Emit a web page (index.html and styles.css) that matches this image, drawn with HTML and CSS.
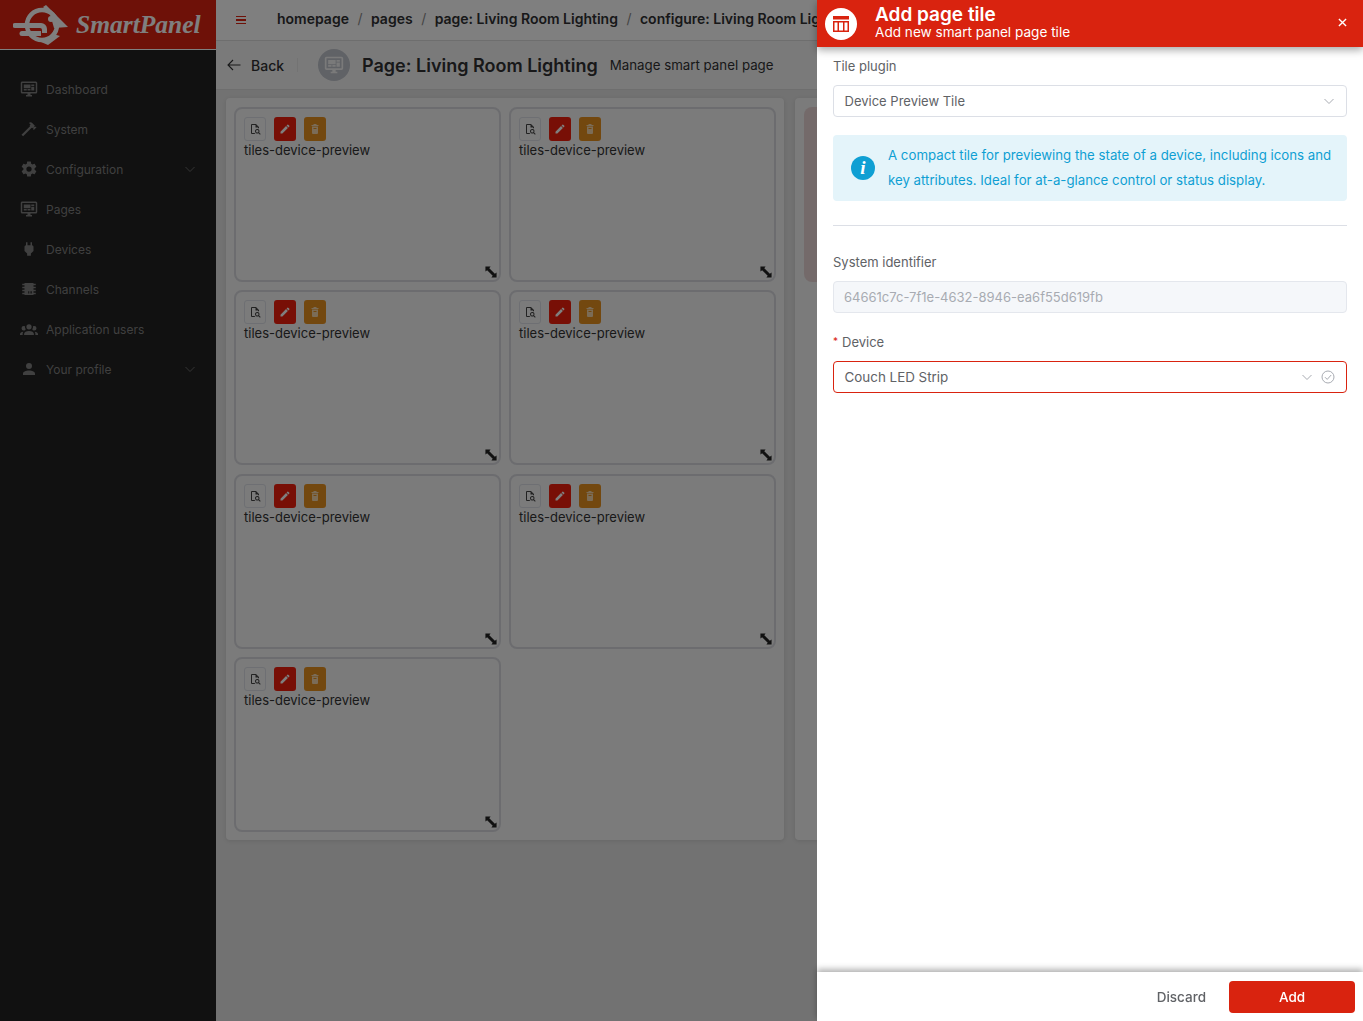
FILE: index.html
```html
<!DOCTYPE html>
<html lang="en">
<head>
    <meta charset="UTF-8">
    <meta name="viewport" content="width=device-width, initial-scale=1.0">
    <title>Add page tile</title>
    <link rel="stylesheet" href="styles.css">
</head>
<body>
    <svg class="sprite" xmlns="http://www.w3.org/2000/svg">
        <symbol id="i-monitor" viewBox="0 0 24 24"><path d="M21,16V4H3V16H21M21,2A2,2 0 0,1 23,4V16A2,2 0 0,1 21,18H14V20H16V22H8V20H10V18H3C1.89,18 1,17.1 1,16V4C1,2.89 1.89,2 3,2H21M5,6H14V11H5V6M15,6H19V8H15V6M19,9V14H15V9H19M5,12H9V14H5V12M10,12H14V14H10V12Z"/></symbol>
        <symbol id="i-hammer" viewBox="0 0 24 24"><path d="M2 19.63L13.43 8.2L12.72 7.5L14.14 6.07L12 3.89C13.2 2.7 15.09 2.7 16.27 3.89L19.87 7.5L18.45 8.91H21.29L22 9.62L18.45 13.21L17.74 12.5V9.62L16.27 11.04L15.56 10.33L4.13 21.76L2 19.63Z"/></symbol>
        <symbol id="i-cog" viewBox="0 0 24 24"><path d="M12,15.5A3.5,3.5 0 0,1 8.5,12A3.5,3.5 0 0,1 12,8.5A3.5,3.5 0 0,1 15.5,12A3.5,3.5 0 0,1 12,15.5M19.43,12.97C19.47,12.65 19.5,12.33 19.5,12C19.5,11.67 19.47,11.34 19.43,11L21.54,9.37C21.73,9.22 21.78,8.95 21.66,8.73L19.66,5.27C19.54,5.05 19.27,4.96 19.05,5.05L16.56,6.05C16.04,5.66 15.5,5.32 14.87,5.07L14.5,2.42C14.46,2.18 14.25,2 14,2H10C9.75,2 9.54,2.18 9.5,2.42L9.13,5.07C8.5,5.32 7.96,5.66 7.44,6.05L4.95,5.05C4.73,4.96 4.46,5.05 4.34,5.27L2.34,8.73C2.21,8.95 2.27,9.22 2.46,9.37L4.57,11C4.53,11.34 4.5,11.67 4.5,12C4.5,12.33 4.53,12.65 4.57,12.97L2.46,14.63C2.27,14.78 2.21,15.05 2.34,15.27L4.34,18.73C4.46,18.95 4.73,19.03 4.95,18.95L7.44,17.94C7.96,18.34 8.5,18.68 9.13,18.93L9.5,21.58C9.54,21.82 9.75,22 10,22H14C14.25,22 14.46,21.82 14.5,21.58L14.87,18.93C15.5,18.67 16.04,18.34 16.56,17.94L19.05,18.95C19.27,19.03 19.54,18.95 19.66,18.73L21.66,15.27C21.78,15.05 21.73,14.78 21.54,14.63L19.43,12.97Z"/></symbol>
        <symbol id="i-plug" viewBox="0 0 24 24"><path d="M16,7V3H14V7H10V3H8V7C7,7 6,8 6,9V14.5L9.5,18V21H14.5V18L18,14.5V9C18,8 17,7 16,7Z"/></symbol>
        <symbol id="i-chip" viewBox="0 0 24 24"><path d="M6,4H18V5H21V7H18V9H21V11H18V13H21V15H18V17H21V19H18V20H6V19H3V17H6V15H3V13H6V11H3V9H6V7H3V5H6V4M11,15V18H12V15H11M13,15V18H14V15H13M15,15V18H16V15H15Z"/></symbol>
        <symbol id="i-users" viewBox="0 0 24 24"><path d="M12,5.5A3.5,3.5 0 0,1 15.5,9A3.5,3.5 0 0,1 12,12.5A3.5,3.5 0 0,1 8.5,9A3.5,3.5 0 0,1 12,5.5M5,8C5.56,8 6.08,8.15 6.53,8.42C6.38,9.85 6.8,11.27 7.66,12.38C7.16,13.34 6.16,14 5,14A3,3 0 0,1 2,11A3,3 0 0,1 5,8M19,8A3,3 0 0,1 22,11A3,3 0 0,1 19,14C17.84,14 16.84,13.34 16.34,12.38C17.2,11.27 17.62,9.85 17.47,8.42C17.92,8.15 18.44,8 19,8M5.5,18.25C5.5,16.18 8.41,14.5 12,14.5C15.59,14.5 18.5,16.18 18.5,18.25V20H5.5V18.25M0,20V18.5C0,17.11 1.89,15.94 4.45,15.6C3.86,16.28 3.5,17.22 3.5,18.25V20H0M24,20H20.5V18.25C20.5,17.22 20.14,16.28 19.55,15.6C22.11,15.94 24,17.11 24,18.5V20Z"/></symbol>
        <symbol id="i-user" viewBox="0 0 24 24"><path d="M12,4A4,4 0 0,1 16,8A4,4 0 0,1 12,12A4,4 0 0,1 8,8A4,4 0 0,1 12,4M12,14C16.42,14 20,15.79 20,18V20H4V18C4,15.79 7.58,14 12,14Z"/></symbol>
        <symbol id="i-chevron" viewBox="0 0 12 12"><path d="M1.5 4L6 8.5L10.5 4" fill="none" stroke="currentColor" stroke-width="1"/></symbol>
        <symbol id="i-pencil" viewBox="0 0 24 24"><path d="M20.71,7.04C21.1,6.65 21.1,6 20.71,5.63L18.37,3.29C18,2.9 17.35,2.9 16.96,3.29L15.12,5.12L18.87,8.87M3,17.25V21H6.75L17.81,9.93L14.06,6.18L3,17.25Z"/></symbol>
        <symbol id="i-trash" viewBox="0 0 24 24"><path d="M9 2h6v2h4v2H5V4h4V2M6 7h12v13a2 2 0 0 1-2 2H8a2 2 0 0 1-2-2V7m3 3v2h6v-2H9Z" fill-rule="evenodd"/></symbol>
        <symbol id="i-file" viewBox="0 0 24 24"><path d="M14,2H6A2,2 0 0,0 4,4V20A2,2 0 0,0 6,22H13C12.59,21.75 12.2,21.44 11.86,21.1C11.53,20.77 11.25,20.4 11,20H6V4H13V9H18V10.18C18.71,10.34 19.39,10.61 20,11V8L14,2M20.31,18.9C21.64,16.79 21,14 18.91,12.68C16.8,11.35 14,12 12.69,14.08C11.35,16.19 12,18.97 14.09,20.3C15.55,21.23 17.41,21.23 18.88,20.32L22,23.39L23.39,22L20.31,18.9M16.5,19A2.5,2.5 0 0,1 14,16.5A2.5,2.5 0 0,1 16.5,14A2.5,2.5 0 0,1 19,16.5A2.5,2.5 0 0,1 16.5,19Z"/></symbol>
        <symbol id="i-resize" viewBox="0 0 14 14"><path d="M0.500 0.500H6.500L5 2.500 11.500 9 13.500 7.500V13.500H7.500L9 11.500 2.500 5 0.500 6.500V0.500Z"/></symbol>
    </svg>

    <div class="app">
        <aside class="sidebar">
            <div class="logo">
                <svg class="logo-mark" viewBox="0 0 56 42">
                    <circle cx="29" cy="21" r="15" fill="none" stroke="currentColor" stroke-width="4.500"/>
                    <path d="M30 3l3-2 22 22-14 1-4-14Z" fill="currentColor"/>
                    <path d="M28 38l12-8 7 2-12 9Z" fill="currentColor"/>
                    <path d="M2 19h26a6 6 0 0 1 6 6v4h-5v-3a2 2 0 0 0-2-2H2a2.500 2.500 0 0 1 0-5Z" fill="currentColor"/>
                    <path d="M9 27h19v5H9a2.500 2.500 0 0 1 0-5Z" fill="currentColor"/>
                    <circle cx="38" cy="15" r="3" fill="currentColor"/>
                </svg>
                <span class="logo-text">SmartPanel</span>
            </div>
            <nav class="menu">
                <a class="menu-item"><svg class="menu-icon"><use href="#i-monitor"/></svg>Dashboard</a>
                <a class="menu-item"><svg class="menu-icon"><use href="#i-hammer"/></svg>System</a>
                <a class="menu-item"><svg class="menu-icon"><use href="#i-cog"/></svg>Configuration<svg class="menu-arrow"><use href="#i-chevron"/></svg></a>
                <a class="menu-item"><svg class="menu-icon"><use href="#i-monitor"/></svg>Pages</a>
                <a class="menu-item"><svg class="menu-icon"><use href="#i-plug"/></svg>Devices</a>
                <a class="menu-item"><svg class="menu-icon"><use href="#i-chip"/></svg>Channels</a>
                <a class="menu-item"><svg class="menu-icon"><use href="#i-users"/></svg>Application users</a>
                <a class="menu-item"><svg class="menu-icon"><use href="#i-user"/></svg>Your profile<svg class="menu-arrow"><use href="#i-chevron"/></svg></a>
            </nav>
        </aside>

        <div class="main">
            <header class="topbar">
                <span class="hamburger"><i></i><i></i><i></i></span>
                <div class="crumbs">
                    <span>homepage</span><em>/</em><span>pages</span><em>/</em><span>page: Living Room Lighting</span><em>/</em><span>configure: Living Room Lighting</span>
                </div>
            </header>
            <div class="page-head">
                <a class="back">
                    <svg class="back-arrow" viewBox="0 0 14 12"><path d="M13.500 6H1M6 1L1 6l5 5" fill="none" stroke="currentColor" stroke-width="1.100"/></svg>
                    Back
                </a>
                <span class="head-sep"></span>
                <span class="head-icon"><svg><use href="#i-monitor"/></svg></span>
                <h1>Page: Living Room Lighting</h1>
                <span class="head-sub">Manage smart panel page</span>
            </div>
            <div class="content">
                <section class="panel">
                    <div class="tile">
                        <div class="tile-actions">
                            <button class="btn-plain"><svg><use href="#i-file"/></svg></button>
                            <button class="btn-red"><svg><use href="#i-pencil"/></svg></button>
                            <button class="btn-orange"><svg><use href="#i-trash"/></svg></button>
                        </div>
                        <div class="tile-name">tiles-device-preview</div>
                        <svg class="tile-resize"><use href="#i-resize"/></svg>
                    </div>
                    <div class="tile">
                        <div class="tile-actions">
                            <button class="btn-plain"><svg><use href="#i-file"/></svg></button>
                            <button class="btn-red"><svg><use href="#i-pencil"/></svg></button>
                            <button class="btn-orange"><svg><use href="#i-trash"/></svg></button>
                        </div>
                        <div class="tile-name">tiles-device-preview</div>
                        <svg class="tile-resize"><use href="#i-resize"/></svg>
                    </div>
                    <div class="tile">
                        <div class="tile-actions">
                            <button class="btn-plain"><svg><use href="#i-file"/></svg></button>
                            <button class="btn-red"><svg><use href="#i-pencil"/></svg></button>
                            <button class="btn-orange"><svg><use href="#i-trash"/></svg></button>
                        </div>
                        <div class="tile-name">tiles-device-preview</div>
                        <svg class="tile-resize"><use href="#i-resize"/></svg>
                    </div>
                    <div class="tile">
                        <div class="tile-actions">
                            <button class="btn-plain"><svg><use href="#i-file"/></svg></button>
                            <button class="btn-red"><svg><use href="#i-pencil"/></svg></button>
                            <button class="btn-orange"><svg><use href="#i-trash"/></svg></button>
                        </div>
                        <div class="tile-name">tiles-device-preview</div>
                        <svg class="tile-resize"><use href="#i-resize"/></svg>
                    </div>
                    <div class="tile">
                        <div class="tile-actions">
                            <button class="btn-plain"><svg><use href="#i-file"/></svg></button>
                            <button class="btn-red"><svg><use href="#i-pencil"/></svg></button>
                            <button class="btn-orange"><svg><use href="#i-trash"/></svg></button>
                        </div>
                        <div class="tile-name">tiles-device-preview</div>
                        <svg class="tile-resize"><use href="#i-resize"/></svg>
                    </div>
                    <div class="tile">
                        <div class="tile-actions">
                            <button class="btn-plain"><svg><use href="#i-file"/></svg></button>
                            <button class="btn-red"><svg><use href="#i-pencil"/></svg></button>
                            <button class="btn-orange"><svg><use href="#i-trash"/></svg></button>
                        </div>
                        <div class="tile-name">tiles-device-preview</div>
                        <svg class="tile-resize"><use href="#i-resize"/></svg>
                    </div>
                    <div class="tile">
                        <div class="tile-actions">
                            <button class="btn-plain"><svg><use href="#i-file"/></svg></button>
                            <button class="btn-red"><svg><use href="#i-pencil"/></svg></button>
                            <button class="btn-orange"><svg><use href="#i-trash"/></svg></button>
                        </div>
                        <div class="tile-name">tiles-device-preview</div>
                        <svg class="tile-resize"><use href="#i-resize"/></svg>
                    </div>
                </section>
                <section class="panel-side">
                    <div class="side-tile"></div>
                </section>
            </div>
        </div>
    </div>

    <div class="overlay"></div>

    <aside class="drawer">
        <header class="drawer-head">
            <span class="drawer-icon">
                <svg viewBox="0 0 16 16"><path d="M0 0h16v3.500H0ZM0 5h16v11H0ZM1.500 6.500v8h3v-8ZM6 6.500v8h4v-8ZM11.500 6.500v8h3v-8Z" fill-rule="evenodd"/></svg>
            </span>
            <div class="drawer-titles">
                <div class="drawer-title">Add page tile</div>
                <div class="drawer-sub">Add new smart panel page tile</div>
            </div>
            <svg class="drawer-close" viewBox="0 0 10 10"><path d="M1 1l8 8M9 1l-8 8" fill="none" stroke="currentColor" stroke-width="1.500"/></svg>
        </header>
        <div class="drawer-body">
            <label class="field-label">Tile plugin</label>
            <div class="select">
                <span>Device Preview Tile</span>
                <svg class="select-arrow"><use href="#i-chevron"/></svg>
            </div>
            <div class="alert">
                <svg class="alert-icon" viewBox="0 0 24 24">
                    <circle cx="12" cy="12" r="12" fill="#0f9fd3"/>
                    <text x="12" y="18" text-anchor="middle" class="alert-i">i</text>
                </svg>
                <p>A compact tile for previewing the state of a device, including icons and key attributes. Ideal for at-a-glance control or status display.</p>
            </div>
            <hr class="divider">
            <label class="field-label">System identifier</label>
            <div class="input-disabled">64661c7c-7f1e-4632-8946-ea6f55d619fb</div>
            <label class="field-label field-required"><b>*</b>Device</label>
            <div class="select select-error">
                <span>Couch LED Strip</span>
                <svg class="select-arrow"><use href="#i-chevron"/></svg>
                <svg class="select-check" viewBox="0 0 14 14"><circle cx="7" cy="7" r="6" fill="none" stroke="currentColor"/><path d="M4 7.200l2.200 2.200L10.200 5" fill="none" stroke="currentColor"/></svg>
            </div>
        </div>
        <footer class="drawer-foot">
            <button class="btn-discard">Discard</button>
            <button class="btn-add">Add</button>
        </footer>
    </aside>
</body>
</html>
```

FILE: styles.css
```css
* {
    box-sizing: border-box;
}
html, body {
    height: 100%;
}
body {
    margin: 0;
    overflow: hidden;
    font-family: Inter, "Liberation Sans", sans-serif;
    font-size: 13px;
    color: #303133;
    background-color: #e4e4e4;
}
.sprite {
    display: none;
}
.app {
    display: flex;
    height: 100%;
}

/* sidebar */
.sidebar {
    flex: 0 0 216px;
    background-color: #222;
    color: #808080;
}
.logo {
    display: flex;
    align-items: center;
    height: 50px;
    padding-left: 13px;
    background-color: #dc2310;
    border-bottom: 1px solid #fff;
    color: #fff;
}
.logo-mark {
    width: 56px;
    height: 42px;
}
.logo-text {
    margin-left: 7px;
    font-family: "Liberation Serif", serif;
    font-style: italic;
    font-weight: 700;
    font-size: 25.500px;
    white-space: nowrap;
}
.menu {
    padding-top: 19px;
}
.menu-item {
    display: flex;
    align-items: center;
    height: 40px;
    padding: 0 20px;
    font-size: 12px;
}
.menu-icon {
    width: 18px;
    height: 18px;
    margin-right: 8px;
    fill: currentColor;
}
.menu-arrow {
    width: 12px;
    height: 12px;
    margin-left: auto;
    color: #6a6a6a;
}

/* main column */
.main {
    flex: 1;
    min-width: 0;
    overflow: hidden;
}
.topbar {
    display: flex;
    align-items: center;
    height: 41px;
    background-color: #fff;
    border-bottom: 1px solid #ddd;
    white-space: nowrap;
}
.hamburger {
    display: flex;
    flex-direction: column;
    gap: 2px;
    margin-left: 20px;
    width: 10px;
}
.hamburger i {
    display: block;
    height: 1.500px;
    background-color: #dc2310;
}
.crumbs {
    margin-left: 31px;
    font-weight: 600;
    font-size: 14px;
    margin-top: -3px;
}
.crumbs em {
    margin: 0 8.500px;
    font-style: normal;
    font-weight: 400;
    color: #8a8a8a;
}
.page-head {
    display: flex;
    align-items: center;
    height: 49px;
    background-color: #f5f5f5;
    border-bottom: 1px solid #ddd;
    white-space: nowrap;
}
.back {
    display: flex;
    align-items: center;
    margin-left: 11px;
    font-size: 14px;
    font-weight: 500;
}
.back-arrow {
    width: 14px;
    height: 12px;
    margin-right: 10px;
}
.head-sep {
    width: 1px;
    height: 14px;
    margin-left: 13px;
    background-color: #e6e6e6;
}
.head-icon {
    display: flex;
    align-items: center;
    justify-content: center;
    width: 32px;
    height: 32px;
    margin-left: 20px;
    border-radius: 50%;
    background-color: #c0c4cc;
}
.head-icon svg {
    width: 20px;
    height: 20px;
    fill: #f5f5f5;
}
h1 {
    margin: 0 0 0 12px;
    font-size: 18px;
    font-weight: 600;
}
.head-sub {
    margin-left: 12px;
    font-size: 13.300px;
}
.content {
    display: flex;
    gap: 11px;
    padding: 8px 10px;
}
.panel {
    flex: 0 0 558px;
    display: grid;
    grid-template-columns: 267px 267px;
    grid-auto-rows: 175px;
    gap: 8.500px 8px;
    padding: 8.750px 8px;
    height: 742px;
    background-color: #f6f6f6;
    border-radius: 4px;
    box-shadow: 0 1px 4px rgba(0, 0, 0, 0.1);
}
.panel-side {
    flex: 0 0 400px;
    height: 742px;
    padding: 9px;
    background-color: #f6f6f6;
    border-radius: 4px;
    box-shadow: 0 1px 4px rgba(0, 0, 0, 0.1);
}
.side-tile {
    height: 175px;
    background-color: #e8d5d5;
    border-radius: 8px;
}

/* tile */
.tile {
    position: relative;
    padding: 8px;
    border: 2px solid #d8d9de;
    border-radius: 8px;
}
.tile-actions {
    display: flex;
    gap: 8px;
}
.tile-actions button {
    display: flex;
    align-items: center;
    justify-content: center;
    width: 22px;
    height: 24px;
    padding: 0;
    border: 1px solid transparent;
    border-radius: 3px;
}
.tile-actions svg {
    width: 12px;
    height: 12px;
}
.btn-plain {
    background-color: transparent;
    border-color: #dcdfe6 !important;
    fill: #444;
}
.btn-red {
    background-color: #f01f0c;
    fill: #fff;
}
.btn-orange {
    background-color: #e6901f;
    fill: #f7d9ae;
}
.tile-name {
    line-height: 18px;
    font-size: 13px;
    color: #333;
}
.tile-resize {
    position: absolute;
    right: 2px;
    bottom: 2px;
    width: 12px;
    height: 12px;
    fill: #222;
}

/* overlay */
.overlay {
    position: fixed;
    inset: 0;
    background-color: rgba(0, 0, 0, 0.5);
}

/* drawer */
.drawer {
    position: fixed;
    top: 0;
    right: 0;
    bottom: 0;
    width: 546px;
    display: flex;
    flex-direction: column;
    background-color: #fff;
}
.drawer-head {
    position: relative;
    display: flex;
    align-items: center;
    height: 47px;
    flex: none;
    padding-left: 8px;
    background-color: #d9230f;
    color: #fff;
    box-shadow: 0 3px 8px rgba(0, 0, 0, 0.35);
}
.drawer-icon {
    display: flex;
    align-items: center;
    justify-content: center;
    width: 32px;
    height: 32px;
    border-radius: 50%;
    background-color: #fff;
}
.drawer-icon svg {
    width: 16px;
    height: 16px;
    fill: #d9230f;
}
.drawer-titles {
    margin-left: 18px;
}
.drawer-title {
    font-size: 19px;
    font-weight: 600;
    line-height: 18px;
    margin-top: -2px;
}
.drawer-sub {
    font-size: 13.600px;
    line-height: 16px;
}
.drawer-close {
    width: 9px;
    height: 9px;
    margin-left: auto;
    margin-right: 16px;
    margin-top: -3px;
}
.drawer-body {
    flex: 1;
    padding: 0 16px;
}
.field-label {
    display: block;
    color: #606266;
    font-size: 13px;
    line-height: 20px;
    margin-top: 9px;
    margin-bottom: 9px;
}
.field-required {
    margin-top: 18px;
}
.field-required b {
    color: #d9230f;
    font-weight: 400;
    font-size: 10px;
    margin-right: 4px;
    vertical-align: 2px;
}
.select {
    display: flex;
    align-items: center;
    height: 32px;
    padding: 0 11px 0 10.500px;
    border: 1px solid #dcdfe6;
    border-radius: 4px;
    color: #606266;
    font-size: 13px;
}
.select-arrow {
    width: 12px;
    height: 12px;
    margin-left: auto;
    color: #a8abb2;
}
.select-error {
    border-color: #d9230f;
    font-size: 13.400px;
}
.select-check {
    width: 14px;
    height: 14px;
    margin-left: 8px;
    color: #a8abb2;
}
.alert {
    display: flex;
    align-items: center;
    gap: 13px;
    margin-top: 18px;
    padding: 8px 14px 8px 18px;
    background-color: #e4f4fa;
    border-radius: 4px;
    color: #0f9fd3;
    font-size: 13.250px;
}
.alert p {
    margin: 0;
    line-height: 25px;
}
.alert-icon {
    flex: none;
    width: 24px;
    height: 24px;
}
.alert-i {
    font-family: "Liberation Serif", serif;
    font-style: italic;
    font-weight: 700;
    font-size: 19px;
    fill: #fff;
}
.divider {
    height: 1px;
    margin: 24px 0 0;
    border: 0;
    background-color: #dcdfe6;
}
.divider + .field-label {
    margin-top: 26px;
}
.input-disabled {
    display: flex;
    align-items: center;
    height: 32px;
    padding: 0 10px;
    background-color: #f5f7fa;
    border: 1px solid #e4e7ed;
    border-radius: 4px;
    color: #a8abb2;
    font-size: 13px;
}
.drawer-foot {
    position: relative;
    display: flex;
    align-items: center;
    justify-content: flex-end;
    flex: none;
    height: 49px;
    padding-right: 8px;
    box-shadow: 0 -3px 6px rgba(0, 0, 0, 0.3);
    background-color: #fff;
}
.drawer-foot button {
    height: 32px;
    border: 0;
    font-family: inherit;
    font-size: 13.500px;
    font-weight: 500;
}
.btn-discard {
    background: none;
    color: #606266;
    margin-right: 11px;
    padding: 0 12px;
}
.btn-add {
    width: 126px;
    background-color: #d9230f;
    color: #fff;
    border-radius: 4px;
}
```
